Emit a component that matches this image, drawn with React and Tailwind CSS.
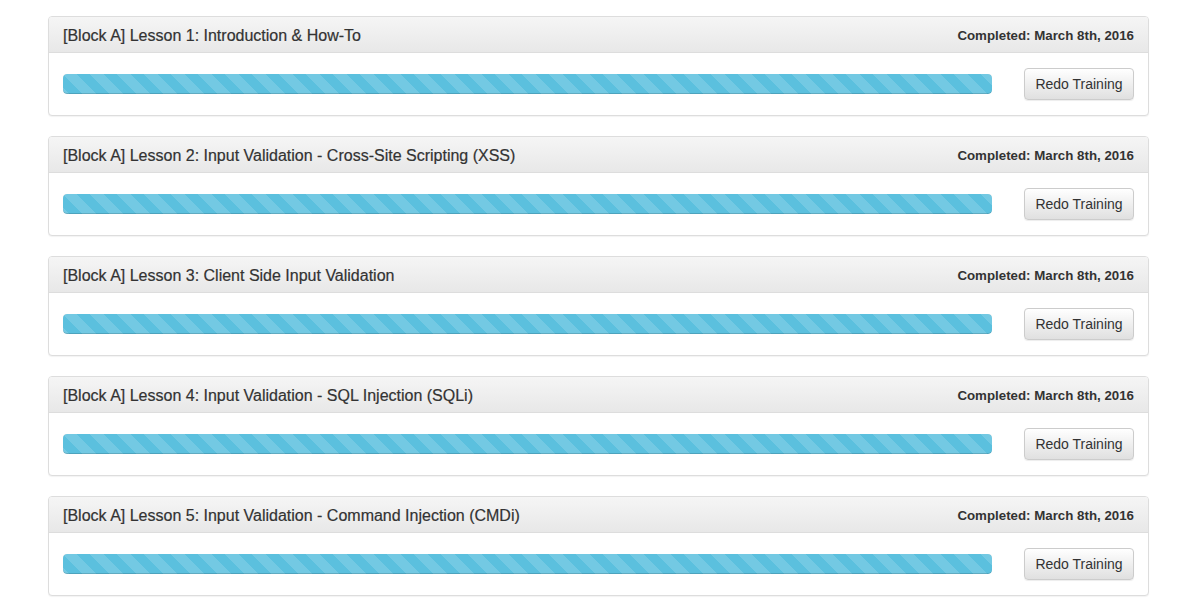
import React from 'react';

const lessons = [
    '[Block A] Lesson 1: Introduction & How-To',
    '[Block A] Lesson 2: Input Validation - Cross-Site Scripting (XSS)',
    '[Block A] Lesson 3: Client Side Input Validation',
    '[Block A] Lesson 4: Input Validation - SQL Injection (SQLi)',
    '[Block A] Lesson 5: Input Validation - Command Injection (CMDi)',
];

function LessonPanel({ title }) {
    return (
        <div className="rounded-[4px] border border-[#dddddd] bg-white shadow-[0_1px_1px_rgba(0,0,0,0.05)]">
            <div className="flex h-[36px] items-center justify-between rounded-t-[3px] border-b border-[#dddddd] bg-gradient-to-b from-[#f5f5f5] to-[#e8e8e8] px-[14px] pt-[2px] text-[#333333]">
                <h3 className="text-[16px] [-webkit-text-stroke:0.2px_#333333]">{title}</h3>
                <span className="text-[13.3px] font-bold text-[#333333]">Completed: March 8th, 2016</span>
            </div>
            <div className="flex h-[62px] items-center gap-[32px] px-[14px]">
                <div className="h-[20px] flex-1 overflow-hidden rounded-[4px] bg-[#f5f5f5] shadow-[inset_0_1px_2px_rgba(0,0,0,0.1)]">
                    <div className="h-full w-full rounded-[4px] bg-[#5bc0de] bg-[linear-gradient(45deg,rgba(255,255,255,0.15)_25%,transparent_25%,transparent_50%,rgba(255,255,255,0.15)_50%,rgba(255,255,255,0.15)_75%,transparent_75%,transparent)] bg-[length:27px_27px] shadow-[inset_0_-1px_0_rgba(0,0,0,0.15)]"></div>
                </div>
                <button className="h-[32px] w-[110px] rounded-[4px] border border-[#cccccc] bg-gradient-to-b from-white to-[#e0e0e0] pt-[1px] text-[14px] text-[#333333] shadow-[inset_0_1px_0_rgba(255,255,255,0.15),0_1px_1px_rgba(0,0,0,0.075)]">
                    Redo Training
                </button>
            </div>
        </div>
    );
}

export default function App() {
    return (
        <div className="min-h-screen bg-white pt-[16px]" style={{ fontFamily: '"Liberation Sans", Arial, sans-serif' }}>
            <div className="ml-[48px] flex w-[1101px] flex-col gap-[20px]">
                {lessons.map((t) => (
                    <LessonPanel key={t} title={t} />
                ))}
            </div>
        </div>
    );
}
